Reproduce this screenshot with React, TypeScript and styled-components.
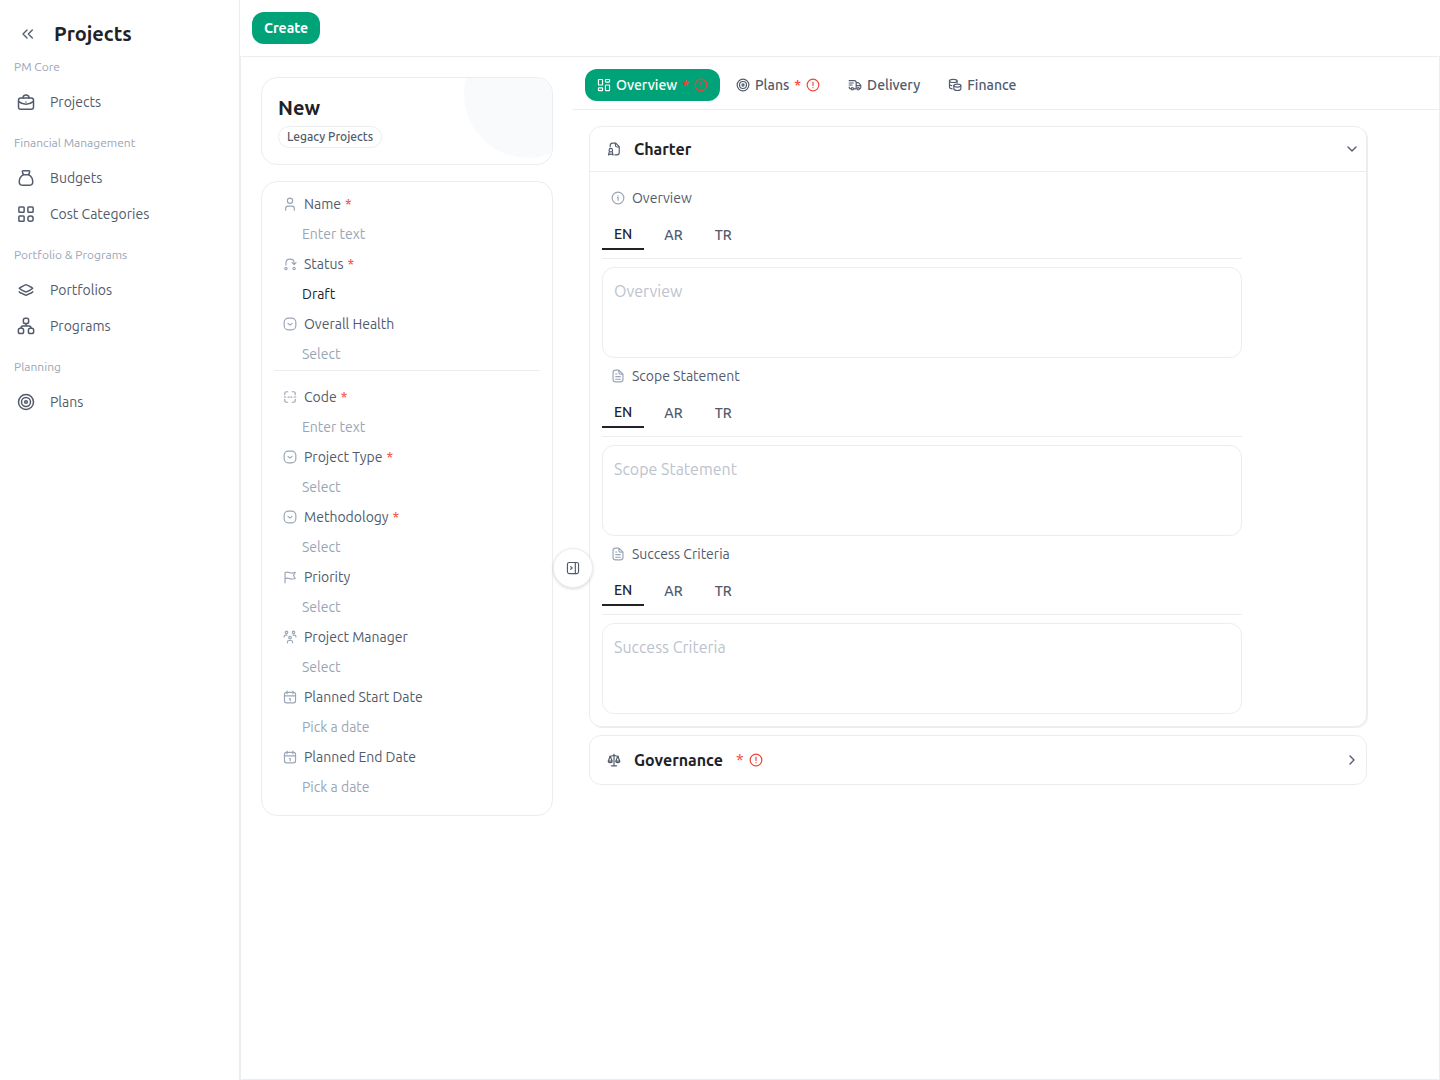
import React, { useState } from "react";
import styled, { createGlobalStyle } from "styled-components";

const c = {
  line: "#ecedf1",
  ink: "#212226",
  text: "#525b6c",
  muted: "#9aa5b5",
  hint: "#bcc3ce",
  green: "#00a377",
  red: "#f04438",
  tint: "#f9fafc",
};

const GlobalStyle = createGlobalStyle`
  *, *::before, *::after { box-sizing: border-box; }
  body { margin: 0; background: #fff; }
  body, button, input, select, textarea {
    font-family: Ubuntu, "Noto Sans", sans-serif;
  }
  h1, h2, h3, p { margin: 0; }
`;

/* ---------- icons ---------- */

const shapes: Record<string, React.ReactNode> = {
  collapse: <path d="M10.500 6 4.500 12l6 6M18.500 6l-6 6 6 6" />,
  briefcase: (
    <>
      <rect x="2" y="6.500" width="20" height="15" rx="3" />
      <path d="M8 6.500C8 3.500 9 2.500 12 2.500s4 1 4 4M2.500 11.500c5.500 4.700 13.500 4.700 19 0M12 12v.1" />
    </>
  ),
  moneybag: (
    <>
      <path d="M8.500 7.500h7c3.500 2 5.500 6 5.500 9.500 0 3.500-2 4.800-5 4.800H8c-3 0-5-1.300-5-4.800 0-3.500 2-7.500 5.500-9.500Z" />
      <path d="m8.500 7.500-1.300-3.400C6.800 3 7.500 2.200 8.600 2.200h6.800c1.100 0 1.800.8 1.400 1.900l-1.300 3.400" />
    </>
  ),
  grid: (
    <>
      <rect x="2.500" y="2.500" width="7" height="7" rx="1" />
      <rect x="14.500" y="2.500" width="7" height="7" rx="1" />
      <rect x="2.500" y="14.500" width="7" height="7" rx="1" />
      <rect x="14.500" y="14.500" width="7" height="7" rx="3" />
    </>
  ),
  layers: (
    <>
      <path d="M3 9.800C3 9 11 5 12 5s9 4 9 4.800-8 4.700-9 4.700S3 10.600 3 9.800Z" />
      <path d="M3 14.200c0 .9 8 4.800 9 4.800s9-3.900 9-4.800" />
    </>
  ),
  hierarchy: (
    <>
      <rect x="8.500" y="1.800" width="7" height="7" rx="2.500" />
      <rect x="1.800" y="15" width="7" height="7" rx="2.500" />
      <rect x="15.200" y="15" width="7" height="7" rx="2.500" />
      <path d="M12 9v3M5.300 15c0-2 .8-3 2.700-3h8c1.900 0 2.700 1 2.700 3" />
    </>
  ),
  target: (
    <>
      <circle cx="12" cy="12" r="10" />
      <circle cx="12" cy="12" r="6" />
      <circle cx="12" cy="12" r="1.800" />
    </>
  ),
  dashboard: (
    <>
      <rect x="2.500" y="2.500" width="7" height="9.500" rx="1" />
      <rect x="14.500" y="2.500" width="7" height="4.500" rx="1" />
      <rect x="2.500" y="17" width="7" height="4.500" rx="1" />
      <rect x="14.500" y="12" width="7" height="9.500" rx="1" />
    </>
  ),
  truck: (
    <>
      <circle cx="7.500" cy="18.500" r="2" />
      <circle cx="17.500" cy="18.500" r="2" />
      <path d="M5.500 18.500C3 18.500 2 18 2 15.500M2 4.500h9c2.500 0 3 .8 3 3v11H9.500M14 8h2.500c2 0 2.700.6 3.700 2.300L22 13v3c0 2-.5 2.500-2.500 2.500M14 13h8M2 8.500h7M2 12h5" />
    </>
  ),
  coins: (
    <>
      <ellipse cx="9" cy="5" rx="6.500" ry="2.700" />
      <path d="M2.500 5v5.500c0 1.300 2 2.200 4 2.500M2.500 10.500V16c0 1.300 2 2.300 4.500 2.600M15.500 5v3" />
      <ellipse cx="16" cy="13" rx="6" ry="2.600" />
      <path d="M10 13v5.500c0 3.900 12 3.900 12 0V13" />
    </>
  ),
  certificate: (
    <>
      <path d="M5.500 8V6c0-3 1-4 4-4H15l6 6v10c0 3-1 4-4 4h-3.500M14.500 2v3.500c0 2.200.8 3 3 3H21" />
      <circle cx="6.500" cy="14" r="3" />
      <path d="M4 17l-1.500 5 4-1.500 4 1.500L9 17" />
    </>
  ),
  chevronDown: <path d="m6 9 6 6 6-6" />,
  chevronRight: <path d="m9 6 6 6-6 6" />,
  user: (
    <>
      <circle cx="12" cy="6.500" r="4.500" />
      <path d="M4.500 22.500V20c0-3 1.500-4.500 4.500-4.500h6c3 0 4.500 1.500 4.500 4.500v2.500" />
    </>
  ),
  status: (
    <>
      <circle cx="5" cy="19.500" r="2" />
      <circle cx="19" cy="19.500" r="2" />
      <path d="M5 13.500V10c0-4 2.500-6.500 7-6.500s7 2.500 7 6.500v2M15.500 9.500 19 13l3.300-3.500" />
    </>
  ),
  select: (
    <>
      <rect x="2" y="2" width="20" height="20" rx="7" />
      <path d="m8.500 11 3.500 3 3.500-3" />
    </>
  ),
  code: (
    <path d="M3 8V6c0-2 1-3 3-3h2M16 3h2c2 0 3 1 3 3v2M21 16v2c0 2-1 3-3 3h-2M8 21H6c-2 0-3-1-3-3v-2M2 12h3M9 11.500v1M12 11.500v1M15 11.500v1M19 12h3" />
  ),
  flag: (
    <path d="M3.500 22V4.500M3.500 15c6-3.500 7 3 17.500-.5-2-3-3-4.500-3-5s1.500-2.500 3-5.500C12 8.500 9.500.5 3.500 4.500" />
  ),
  team: (
    <>
      <circle cx="6" cy="4" r="2.200" />
      <circle cx="18" cy="4" r="2.200" />
      <circle cx="12" cy="13" r="2.200" />
      <path d="M1.800 12v-.5c0-1.800 1-2.700 2.700-2.700h2.300M22.200 12v-.5c0-1.800-1-2.700-2.700-2.700h-2.300M7.500 22v-1c0-2 1-3 3-3h3c2 0 3 1 3 3v1" />
    </>
  ),
  calendar: (
    <>
      <rect x="2.500" y="4" width="19" height="18" rx="3.500" />
      <path d="M7 1.800v4.500M17 1.800v4.500M2.500 10h19M11 14.500h1.300v4" />
    </>
  ),
  info: (
    <>
      <circle cx="12" cy="12" r="10" />
      <path d="M11 11h1.200v5M12 7.800v.2" />
    </>
  ),
  doc: (
    <path d="M13.500 2H8C5 2 3.500 3 3.500 6v12c0 3 1.500 4 4.500 4h8c3 0 4.500-1 4.500-4V9zM13.500 2v4c0 2 .8 3 3 3h4M8 17.500h8M8 13h8M8 8.500h2" />
  ),
  alert: (
    <>
      <circle cx="12" cy="12" r="10" />
      <path d="M12 7v6M12 16.300v.2" />
    </>
  ),
  panel: (
    <>
      <rect x="2.500" y="2.500" width="19" height="19" rx="3" />
      <path d="M16 2.500v19M8 9.500l2.500 2.500L8 14.500" />
    </>
  ),
  scales: (
    <path d="M12 2v20M7.500 22h9M4.500 5.500h2c2 0 3.500-1.500 5.500-1.500s3.500 1.500 5.500 1.500h2M5.500 5.500 2 14c0 3.500 7 3.500 7 0zM18.500 5.500 15 14c0 3.500 7 3.500 7 0zM2 14h7M15 14h7" />
  ),
};

const Svg = styled.svg<{ $color?: string }>`
  flex: none;
  display: block;
  fill: none;
  stroke: ${(p) => p.$color ?? "currentColor"};
  stroke-width: 2;
  stroke-linecap: round;
  stroke-linejoin: round;
`;

function Icon({ name, size = 14, color }: { name: string; size?: number; color?: string }) {
  return (
    <Svg viewBox="0 0 24 24" width={size} height={size} $color={color} aria-hidden="true">
      {shapes[name]}
    </Svg>
  );
}

/* ---------- shell ---------- */

const Shell = styled.div`
  display: grid;
  grid-template-columns: 240px minmax(0, 1fr);
  min-height: 100vh;
`;

const Sidebar = styled.aside`
  border-right: 1px solid ${c.line};
  padding: 10px 0;
`;

const SideHead = styled.header`
  display: flex;
  align-items: center;
  gap: 18px;
  height: 48px;
  padding-left: 20px;
`;

const GhostButton = styled.button`
  display: flex;
  padding: 0;
  border: 0;
  background: none;
  color: ${c.text};
  cursor: pointer;
`;

const PageTitle = styled.h1`
  font-size: 20px;
  line-height: 28px;
  font-weight: 700;
  color: ${c.ink};
`;

const NavGroup = styled.section`
  margin-bottom: 14px;
`;

const NavLabel = styled.h3`
  margin-bottom: 8px;
  padding-left: 14px;
  font-size: 12px;
  line-height: 18px;
  font-weight: 400;
  color: ${c.muted};
`;

const NavLink = styled.a`
  display: flex;
  align-items: center;
  gap: 15px;
  height: 36px;
  padding-left: 17px;
  font-size: 14px;
  color: ${c.text};
  text-decoration: none;
`;

const Main = styled.main`
  display: flex;
  flex-direction: column;
`;

const ActionBar = styled.div`
  display: flex;
  align-items: center;
  height: 56px;
  padding: 0 12px;
`;

const CreateButton = styled.button`
  height: 32px;
  padding: 0 12px;
  border: 0;
  border-radius: 12px;
  background: ${c.green};
  color: #fff;
  font-size: 14px;
  font-weight: 700;
  cursor: pointer;
`;

const Workspace = styled.div`
  flex: 1;
  display: grid;
  grid-template-columns: 292px minmax(0, 1fr);
  gap: 20px;
  padding-left: 20px;
  border: 1px solid ${c.line};
`;

/* ---------- summary column ---------- */

const Summary = styled.div`
  display: flex;
  flex-direction: column;
  gap: 16px;
  padding: 20px 0;
`;

const Hero = styled.section`
  position: relative;
  overflow: hidden;
  padding: 16px;
  border: 1px solid ${c.line};
  border-radius: 16px;

  &::after {
    content: "";
    position: absolute;
    top: -48px;
    right: -40px;
    width: 128px;
    height: 128px;
    border-radius: 50%;
    background: ${c.tint};
  }
`;

const HeroTitle = styled.h2`
  margin-bottom: 4px;
  font-size: 20px;
  line-height: 28px;
  font-weight: 700;
  color: ${c.ink};
`;

const Badge = styled.span`
  display: block;
  width: fit-content;
  padding: 0 8px;
  border: 1px solid ${c.line};
  border-radius: 11px;
  font-size: 12px;
  line-height: 20px;
  font-weight: 500;
  color: ${c.text};
`;

const FormCard = styled.form`
  padding: 7px 12px 13px;
  border: 1px solid ${c.line};
  border-radius: 16px;
`;

const Divider = styled.hr`
  height: 1px;
  margin: 1px 0 11px;
  border: 0;
  background: ${c.line};
`;

const FieldLabel = styled.label<{ $height: number }>`
  display: flex;
  align-items: center;
  gap: 7px;
  height: ${(p) => p.$height}px;
  padding-left: 9px;
  font-size: 14px;
  color: ${c.text};
`;

const Star = styled.span`
  color: ${c.red};
`;

const LabelText = styled.span`
  display: flex;
  gap: 4px;
`;

const TextInput = styled.input`
  display: block;
  width: 100%;
  height: 30px;
  padding: 0 0 0 28px;
  border: 0;
  outline: 0;
  background: none;
  font-size: 14px;
  color: ${c.ink};
  &::placeholder { color: ${c.muted}; opacity: 1; }
`;

const Picker = styled.select<{ $filled: boolean }>`
  display: block;
  width: 100%;
  height: 30px;
  padding: 0 0 0 28px;
  border: 0;
  outline: 0;
  appearance: none;
  background: none;
  font-size: 14px;
  color: ${(p) => (p.$filled ? c.ink : c.muted)};
`;

/* ---------- detail column ---------- */

const Detail = styled.div`
  position: relative;
`;

const PanelToggle = styled.button`
  position: absolute;
  top: 50%;
  left: 0;
  transform: translate(-50%, -50%);
  display: grid;
  place-items: center;
  width: 40px;
  height: 40px;
  padding: 0;
  border: 1px solid ${c.line};
  border-radius: 50%;
  background: #fff;
  box-shadow: 0 1px 3px rgba(16, 24, 40, 0.16);
  color: ${c.text};
  cursor: pointer;
`;

const TabBar = styled.nav`
  display: flex;
  gap: 4px;
  padding: 12px 12px 8px;
  border-bottom: 1px solid ${c.line};
`;

const Tab = styled.button<{ $active: boolean }>`
  display: flex;
  align-items: center;
  gap: 5px;
  height: 32px;
  padding: 0 12px;
  border: 0;
  border-radius: 12px;
  background: ${(p) => (p.$active ? c.green : "none")};
  color: ${(p) => (p.$active ? "#fff" : c.text)};
  font-size: 14px;
  font-weight: 500;
  cursor: pointer;
`;

const Sections = styled.div`
  display: flex;
  flex-direction: column;
  gap: 8px;
  padding: 16px 72px 16px 16px;
`;

const Card = styled.section<{ $raised: boolean }>`
  border: 1px solid ${c.line};
  border-radius: 12px;
  box-shadow: ${(p) => (p.$raised ? `1px 1px 0 ${c.line}` : "none")};
`;

const CardHead = styled.button<{ $open: boolean }>`
  display: flex;
  align-items: center;
  gap: 13px;
  width: 100%;
  height: ${(p) => (p.$open ? 45 : 48)}px;
  padding: 0 6px 0 17px;
  border: 0;
  border-bottom: ${(p) => (p.$open ? `1px solid ${c.line}` : "0")};
  background: none;
  color: ${c.text};
  cursor: pointer;
`;

const CardTitle = styled.span`
  font-size: 16px;
  font-weight: 700;
  color: ${c.ink};
`;

const Flags = styled.span`
  display: flex;
  align-items: center;
  gap: 6px;
  font-size: 16px;
`;

const Push = styled.span`
  margin-left: auto;
`;

const CardBody = styled.div`
  display: flex;
  flex-direction: column;
  gap: 4px;
  padding: 12px;
`;

const Translatable = styled.div`
  width: 100%;
  max-width: 640px;
`;

const Langs = styled.div`
  display: flex;
  gap: 8px;
  margin: 8px 0;
  padding-bottom: 8px;
  border-bottom: 1px solid ${c.line};
`;

const Lang = styled.button<{ $active: boolean }>`
  height: 30px;
  padding: 0 12px;
  border: 0;
  border-bottom: ${(p) => (p.$active ? `2px solid ${c.ink}` : "0")};
  background: none;
  font-size: 14px;
  font-weight: 500;
  color: ${(p) => (p.$active ? c.ink : c.text)};
  cursor: pointer;
`;

const TextArea = styled.textarea`
  display: block;
  width: 100%;
  height: 91px;
  padding: 11px;
  border: 1px solid ${c.line};
  border-radius: 12px;
  outline: 0;
  resize: none;
  background: none;
  font-size: 16px;
  line-height: 24px;
  color: ${c.ink};
  &::placeholder { color: ${c.hint}; opacity: 1; }
`;

/* ---------- data ---------- */

const nav = [
  { label: "PM Core", items: [["briefcase", "Projects"]] },
  { label: "Financial Management", items: [["moneybag", "Budgets"], ["grid", "Cost Categories"]] },
  { label: "Portfolio & Programs", items: [["layers", "Portfolios"], ["hierarchy", "Programs"]] },
  { label: "Planning", items: [["target", "Plans"]] },
];

type FieldSpec = { label: string; icon: string; kind: "text" | "select"; hint: string; required?: boolean; filled?: boolean };

const mainFields: FieldSpec[] = [
  { label: "Name", icon: "user", kind: "text", hint: "Enter text", required: true },
  { label: "Status", icon: "status", kind: "select", hint: "Draft", required: true, filled: true },
  { label: "Overall Health", icon: "select", kind: "select", hint: "Select" },
];

const moreFields: FieldSpec[] = [
  { label: "Code", icon: "code", kind: "text", hint: "Enter text", required: true },
  { label: "Project Type", icon: "select", kind: "select", hint: "Select", required: true },
  { label: "Methodology", icon: "select", kind: "select", hint: "Select", required: true },
  { label: "Priority", icon: "flag", kind: "select", hint: "Select" },
  { label: "Project Manager", icon: "team", kind: "select", hint: "Select" },
  { label: "Planned Start Date", icon: "calendar", kind: "text", hint: "Pick a date" },
  { label: "Planned End Date", icon: "calendar", kind: "text", hint: "Pick a date" },
];

const tabs = [
  { label: "Overview", icon: "dashboard", required: true },
  { label: "Plans", icon: "target", required: true },
  { label: "Delivery", icon: "truck", required: false },
  { label: "Finance", icon: "coins", required: false },
];

const charter = [
  { label: "Overview", icon: "info" },
  { label: "Scope Statement", icon: "doc" },
  { label: "Success Criteria", icon: "doc" },
];

/* ---------- parts ---------- */

const toId = (s: string) => s.toLowerCase().replace(/\W+/g, "-");

function Field({ label, icon, kind, hint, required, filled = false }: FieldSpec) {
  const id = "field-" + toId(label);
  return (
    <div>
      <FieldLabel htmlFor={id} $height={30}>
        <Icon name={icon} color={c.muted} />
        <LabelText>
          {label}
          {required && <Star>*</Star>}
        </LabelText>
      </FieldLabel>
      {kind === "text" ? (
        <TextInput id={id} placeholder={hint} />
      ) : (
        <Picker id={id} $filled={filled}>
          <option>{hint}</option>
        </Picker>
      )}
    </div>
  );
}

function TranslatableField({ label, icon }: { label: string; icon: string }) {
  const [lang, setLang] = useState("EN");
  const id = "charter-" + toId(label);
  return (
    <Translatable>
      <FieldLabel htmlFor={id} $height={28}>
        <Icon name={icon} color={c.muted} />
        {label}
      </FieldLabel>
      <Langs role="tablist" aria-label={label + " language"}>
        {["EN", "AR", "TR"].map((l) => (
          <Lang key={l} type="button" role="tab" aria-selected={l === lang} $active={l === lang} onClick={() => setLang(l)}>
            {l}
          </Lang>
        ))}
      </Langs>
      <TextArea id={id} placeholder={label} />
    </Translatable>
  );
}

export default function App() {
  const [tab, setTab] = useState("Overview");
  return (
    <>
      <GlobalStyle />
      <Shell>
        <Sidebar>
          <SideHead>
            <GhostButton type="button" aria-label="Collapse menu">
              <Icon name="collapse" size={16} />
            </GhostButton>
            <PageTitle>Projects</PageTitle>
          </SideHead>
          {nav.map((group) => (
            <NavGroup key={group.label}>
              <NavLabel>{group.label}</NavLabel>
              {group.items.map(([icon, label]) => (
                <NavLink key={label} href={"#" + toId(label)}>
                  <Icon name={icon} size={18} />
                  {label}
                </NavLink>
              ))}
            </NavGroup>
          ))}
        </Sidebar>

        <Main>
          <ActionBar>
            <CreateButton type="button">Create</CreateButton>
          </ActionBar>
          <Workspace>
            <Summary>
              <Hero>
                <HeroTitle>New</HeroTitle>
                <Badge>Legacy Projects</Badge>
              </Hero>
              <FormCard>
                {mainFields.map((f) => <Field key={f.label} {...f} />)}
                <Divider />
                {moreFields.map((f) => <Field key={f.label} {...f} />)}
              </FormCard>
            </Summary>

            <Detail>
              <TabBar>
                {tabs.map((t) => (
                  <Tab key={t.label} type="button" $active={t.label === tab} onClick={() => setTab(t.label)}>
                    <Icon name={t.icon} />
                    {t.label}
                    {t.required && (
                      <>
                        <Star>*</Star>
                        <Icon name="alert" color={c.red} />
                      </>
                    )}
                  </Tab>
                ))}
              </TabBar>
              <Sections>
                <Card $raised>
                  <CardHead type="button" aria-expanded="true" $open>
                    <Icon name="certificate" />
                    <CardTitle>Charter</CardTitle>
                    <Push><Icon name="chevronDown" size={16} /></Push>
                  </CardHead>
                  <CardBody>
                    {charter.map((f) => <TranslatableField key={f.label} {...f} />)}
                  </CardBody>
                </Card>
                <Card $raised={false}>
                  <CardHead type="button" aria-expanded="false" $open={false}>
                    <Icon name="scales" />
                    <CardTitle>Governance</CardTitle>
                    <Flags>
                      <Star>*</Star>
                      <Icon name="alert" color={c.red} />
                    </Flags>
                    <Push><Icon name="chevronRight" size={16} /></Push>
                  </CardHead>
                </Card>
              </Sections>
              <PanelToggle type="button" aria-label="Toggle side panel">
                <Icon name="panel" />
              </PanelToggle>
            </Detail>
          </Workspace>
        </Main>
      </Shell>
    </>
  );
}
